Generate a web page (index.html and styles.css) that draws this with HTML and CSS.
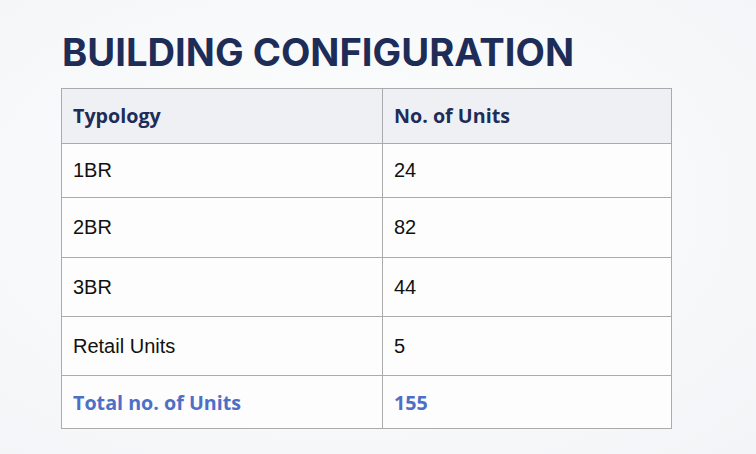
FILE: index.html
```html
<!DOCTYPE html>
<html lang="en">
<head>
<meta charset="utf-8">
<title>Building Configuration</title>
<link rel="stylesheet" href="styles.css">
</head>
<body>
<main class="slide">
  <h1 class="title">BUILDING CONFIGURATION</h1>
  <table class="config">
    <thead>
      <tr class="row-head"><th>Typology</th><th>No. of Units</th></tr>
    </thead>
    <tbody>
      <tr class="row-a"><td>1BR</td><td>24</td></tr>
      <tr class="row-b"><td>2BR</td><td>82</td></tr>
      <tr class="row-c"><td>3BR</td><td>44</td></tr>
      <tr class="row-c"><td>Retail Units</td><td>5</td></tr>
      <tr class="row-total"><td>Total no. of Units</td><td>155</td></tr>
    </tbody>
  </table>
</main>
</body>
</html>
```

FILE: styles.css
```css
* { box-sizing: border-box; }
html, body { margin: 0; padding: 0; }
body {
  width: 756px;
  height: 454px;
  overflow: hidden;
  background: radial-gradient(ellipse at 45% 45%, #fdfdfd 0%, #f8f9fa 55%, #f3f4f7 100%);
  font-family: "Liberation Sans", Arial, sans-serif;
}
.slide {
  padding: 30px 0 0 61px;
}
.title {
  margin: 0 0 0 1px;
  font-family: Inter, "Liberation Sans", sans-serif;
  font-weight: 700;
  font-size: 38.2px;
  line-height: 44px;
  color: #1e2c58;
  letter-spacing: 0;
}
.config {
  margin-top: 14px;
  border-collapse: collapse;
  width: 611px;
  table-layout: fixed;
  background: #fdfdfd;
}
.config th, .config td {
  border: 1px solid #ababab;
  text-align: left;
  vertical-align: middle;
  padding: 0 0 0 11px;
  font-size: 20px;
  color: #111;
}
.config th:first-child, .config td:first-child { width: 321px; }
.config th {
  background: #eef0f4;
  font-family: "Open Sans", "Liberation Sans", sans-serif;
  font-size: 19.7px;
  font-weight: 700;
  color: #1e2c58;
  padding-bottom: 2px;
}
.row-head th { height: 55px; }
.row-a td { height: 54px; }
.row-b td { height: 60px; }
.row-c td { height: 59px; }
.row-total td {
  height: 53px;
  font-family: "Open Sans", "Liberation Sans", sans-serif;
  font-size: 19.7px;
  font-weight: 700;
  color: #4d6fc6;
}
```
